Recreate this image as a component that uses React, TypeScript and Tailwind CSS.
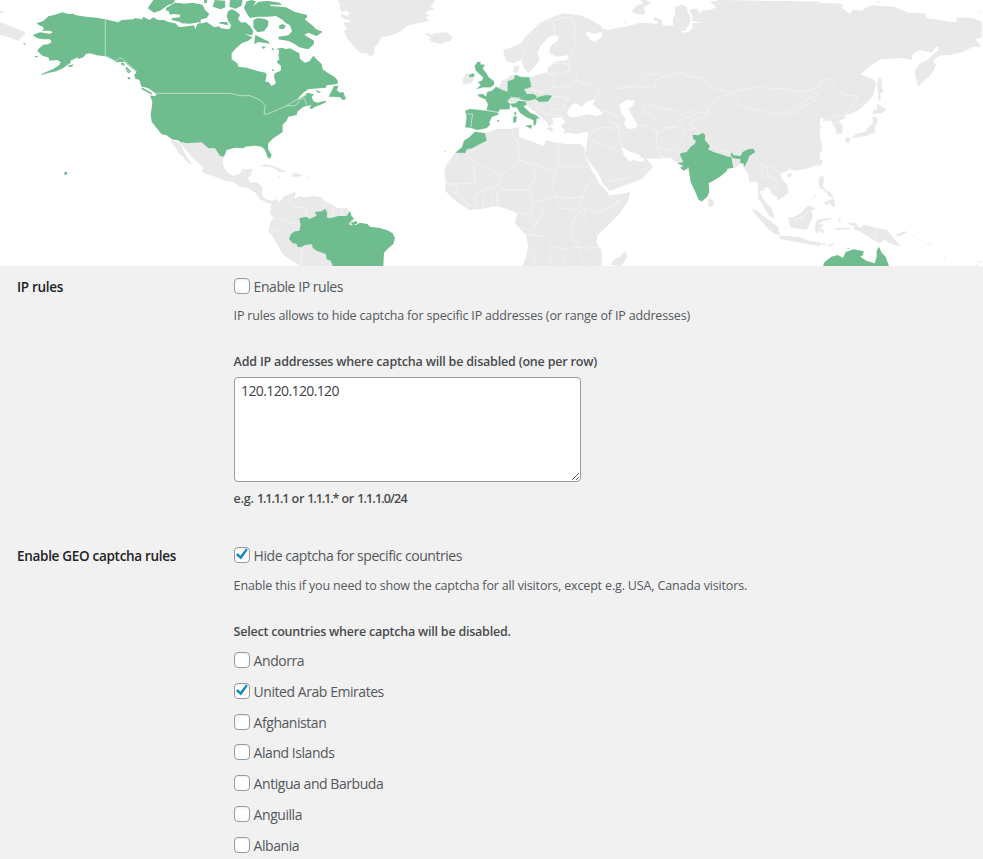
import { useState } from "react";

const GREEN = "#6fbd8f";
const LAND = "#e9e9e9";

function WorldMap() {
  return (
    <svg className="block h-[266px] w-full shrink-0 bg-white" viewBox="0 0 2949 798" preserveAspectRatio="none" strokeLinejoin="round">
      {/* Greenland, Iceland, Mexico, Caribbean and South America */}
      <g transform="translate(540 0)" fill={LAND}>
        <path d="M474,0 480,12 478,20 485,35 500,32 510,40 500,48 484,42 482,50 495,58 510,60 512,66 490,68 496,78 503,88 492,92 497,108 510,125 525,145 545,160 560,160 575,171 582,160 584,140 596,128 604,112 640,104 665,92 680,78 720,68 748,64 738,52 750,48 735,38 750,30 765,28 752,22 760,8 765,0Z" />
        <path d="M0,427 65,427 85,445 105,445 120,468 132,470 128,490 135,508 145,520 160,528 178,522 188,508 218,507 212,525 204,533 210,548 230,546 248,562 245,580 250,592 262,600 278,602 290,597 300,608 298,640 295,650 280,655 270,640 274,612 262,608 240,598 228,580 205,565 178,560 160,546 135,542 100,528 80,522 66,515 70,502 50,485 35,470 20,452 5,435Z" />
        <path d="M-25,420 0,428 8,448 22,472 34,490 32,495 16,480 8,468 -5,460 -8,450 -28,425Z" />
        <path d="M240,498 258,492 285,500 305,508 320,516 300,516 278,503 262,500ZM334,524 345,518 372,526 352,530 334,530ZM292,530 303,530 302,534 293,533ZM382,530 390,530 390,533 382,533Z" />
        <path d="M298,608 310,590 330,582 345,575 348,582 342,590 346,596 358,588 375,592 400,588 425,592 436,604 460,616 470,624 500,624 518,650 520,680 470,720 460,798 360,798 335,782 310,765 290,730 275,705 265,695 268,680 272,665 282,653 295,650Z" />
        <path d="M340,588 330,605 345,620 378,625 380,650M436,604 432,630M462,618 458,650M485,626 485,648M295,655 320,665 355,672M268,690 290,695 318,675M366,745 362,798" fill="none" stroke="#f3f3f3" strokeWidth="3" />
      </g>
      <g transform="translate(540 0)" fill={GREEN}>
        <path d="M358,655 380,650 388,657 410,647 404,636 425,634 436,626 442,640 440,652 450,655 475,648 500,648 510,633 514,648 522,655 508,668 508,676 530,674 540,668 562,672 570,680 600,684 620,690 638,700 645,715 640,732 625,745 612,758 610,798 458,798 452,782 440,778 437,762 410,752 398,744 396,733 378,734 362,742 352,740 350,732 338,730 327,717 333,702 345,694 358,692 362,675Z" />
        <path d="M0,82 42,76 47,90 50,74 80,66 92,74 103,82 118,79 122,85 148,88 154,76 145,64 140,48 144,34 155,28 166,32 180,44 174,58 185,68 196,66 210,78 220,94 216,106 194,102 218,112 205,122 185,130 165,148 155,160 155,178 172,190 175,200 200,203 230,212 256,218 260,222 256,245 266,246 275,258 288,250 282,230 284,220 302,212 303,198 290,186 298,178 295,165 298,152 290,146 305,143 318,147 330,145 358,160 360,176 374,188 388,184 400,167 412,180 425,192 428,208 445,220 465,232 474,243 472,252 440,256 438,263 400,266 385,268 370,278 358,290 350,300 370,290 382,278 402,283 395,290 400,304 412,308 436,302 438,307 420,315 405,320 396,327 388,324 394,315 370,320 352,335 350,345 325,350 320,362 308,374 308,396 280,415 265,430 264,446 275,465 270,477 262,470 255,450 245,440 225,437 195,440 190,445 165,443 140,450 132,470 120,468 105,445 85,445 65,427 0,427Z" />
        <path d="M192,24 200,4 216,0 228,4 220,18 235,5 265,3 272,18 300,20 318,22 345,36 380,44 382,52 374,58 402,80 408,88 428,95 410,108 385,98 373,104 402,122 402,132 385,148 358,142 340,130 325,123 295,118 296,110 325,106 336,94 330,76 316,68 308,60 288,48 265,50 235,50 210,54 200,40Z" />
        <path d="M220,60 232,54 252,56 265,62 264,78 252,94 232,97 220,82ZM226,105 240,112 264,124 270,131 236,126 222,132ZM296,78 308,72 318,78 310,88 298,86ZM244,139 258,140 250,147ZM275,145 280,145 281,151 276,150ZM276,207 284,210 278,214ZM0,12 40,8 68,15 75,30 88,42 80,54 58,60 35,68 0,66ZM98,20 122,28 136,22 135,2 104,0 102,8ZM72,0 82,0 80,10 72,8ZM150,0 188,0 184,18 166,26 148,20ZM120,66 142,66 144,76 116,70ZM260,2 300,8 306,14 270,14ZM404,271 424,275 416,279ZM446,290 462,258 476,257 470,270 480,278 490,276 498,298 488,300 480,292 460,290Z" />
        <path d="M512,668 530,664 533,670 520,676Z" />
      </g>
      <g fill={GREEN}>
        <path d="M316,58 290,53 258,50 225,45 222,41 205,42 187,37 165,44 145,49 130,63 109,70 118,76 128,80 132,86 125,92 150,92 158,97 150,101 130,98 120,97 98,105 112,115 132,118 150,118 155,126 145,133 130,134 116,146 112,153 128,168 145,172 148,182 172,180 182,186 178,195 160,207 140,215 125,222 122,226 145,219 168,214 186,206 212,188 212,180 235,172 232,178 250,172 258,162 270,160 290,166 316,169 335,178 350,187 372,186 385,196 405,212 403,225 406,236 418,240 424,260 448,266 468,282 466,288 450,286 457,305 455,325 452,342 455,365 470,385 485,403 500,406 515,418 530,420 560,430 602,427 602,66 592,74 588,88 582,80 560,84 536,80 526,70 505,66 492,60 474,60 460,52 448,60 430,50 426,58 405,54 400,58 366,60 354,67 342,64Z" />
        <path d="M211,184 226,166 238,155 242,159 230,172ZM204,197 222,193 216,200 206,201ZM104,168 112,167 114,171 106,172ZM68,128 78,131 75,135ZM383,232 390,231 391,238 384,238ZM193,516 201,516 201,524 193,524ZM375,204 384,212 391,221 383,218ZM443,25 460,0 525,0 520,10 505,15 480,32 462,38ZM498,24 525,8 545,10 560,18 570,12 602,12 602,66 570,71 545,70 540,66 516,60 514,55 550,50 550,45 520,42 510,44 505,32 498,32Z" />
      </g>
      <g fill={LAND}>
        <path d="M0,66 40,82 58,90 74,95 76,103 64,112 55,123 35,114 20,110 0,105ZM0,32 15,36 0,40ZM58,760 60,762 57,763ZM246,791 249,793 245,793Z" />
      </g>
      {/* Borders across North America */}
      <g fill="none" stroke="#b9dfc8" strokeWidth="3">
        <path d="M316,56V167L348,184 358,173 366,176 385,192 408,213M452,280H692L720,287H750L780,300 796,318 792,342 800,342 820,335 835,328 858,318 885,302 920,285M858,318 888,316 900,298 914,295 920,315" />
      </g>
      <path d="M366,190 375,186 385,200 398,215 410,214 405,223 388,212ZM420,259 442,264 468,282 466,289 452,285 440,270Z" fill="#fff" />
      <path d="M363,192 370,191 372,197M378,202 392,216M425,265 455,281" fill="none" stroke={GREEN} strokeWidth="5" />

      {/* Eurasian mainland, eastern part */}
      <g transform="translate(2349 0)" fill={LAND}>
        <path d="M-30,3 25,2 70,12 98,9 150,10 180,12 175,22 200,42 210,30 235,32 262,16 335,20 375,38 425,40 432,55 470,60 505,66 520,66 522,52 570,55 596,66 596,112 575,118 592,135 590,142 570,140 540,155 500,166 478,165 460,172 450,185 460,192 452,210 440,228 425,240 406,260 398,235 396,210 412,190 430,182 455,160 466,150 466,141 458,140 448,158 410,150 390,162 386,180 360,174 330,176 295,178 270,192 232,222 250,230 270,238 280,250 272,282 255,305 225,332 190,345 182,358 168,362 180,380 178,400 158,402 160,388 150,374 145,362 128,362 118,366 122,352 100,364 85,370 98,380 122,380 110,386 98,396 108,408 116,430 118,450 100,475 75,490 40,500 15,508 0,505 -60,520Z" />
        <path d="M288,230 296,240 296,262 302,275 292,280 293,300 286,303 285,280 282,250ZM282,312 300,322 312,329 295,340 278,340 268,344 272,330 282,328ZM268,352 282,352 284,365 276,380 275,398 250,408 232,410 208,410 225,400 245,396 262,376 270,370ZM200,412 226,406 222,414ZM186,414 202,412 198,428 190,430ZM106,492 114,478 120,480 114,496 108,500ZM12,522 28,518 24,530 14,532ZM108,530 122,528 122,548 118,560 128,566 130,574 112,565 106,548ZM122,572 134,572 148,582 150,592 138,592 132,580ZM122,608 152,594 158,614 150,622 142,612 128,614ZM82,600 100,584 98,590ZM588,38 596,35 596,40ZM275,3 292,5 285,9ZM575,795 584,792 585,797ZM586,786 596,782 594,790Z" />
        <path d="M15,652 30,652 55,638 75,616 98,626 84,632 90,648 76,680 70,690 45,686 22,682ZM98,664 108,658 148,653 142,660 120,662 108,672 126,674 112,682 124,694 120,702 108,688 106,702 96,692ZM196,668 218,668 228,684 245,674 280,683 312,690 330,712 355,740 320,730 305,720 288,730 262,715 250,706 225,692 210,686 218,678 200,676ZM156,684 196,684 206,688 160,689ZM166,655 174,655 168,672ZM0,708 50,712 76,722 100,726 92,730 50,722 0,716ZM100,732 128,730 130,735 100,735ZM133,735 158,726 150,734 138,740ZM340,704 365,694 372,696 355,707 340,708ZM390,704 398,710 390,708ZM405,715 415,720 412,722ZM425,725 450,738 440,736ZM456,742 462,745 458,746ZM482,770 490,776 486,778Z" />
      </g>
      {/* Central and southern Asia */}
      <g transform="translate(1860 0)" fill={LAND}>
        <path d="M0,84 25,78 48,72 60,68 110,72 115,65 100,60 105,50 125,60 128,76 160,78 158,60 166,40 165,22 182,14 200,20 204,38 212,50 210,70 195,92 180,95 190,98 205,96 218,84 216,70 245,68 214,62 218,50 208,30 230,25 240,42 245,32 275,28 290,22 270,6 300,0 600,5 600,492 565,505 540,510 525,512 510,508 495,515 480,522 488,540 502,555 506,580 488,592 472,602 470,590 455,582 450,568 438,560 430,575 418,570 426,590 440,612 455,625 462,645 462,655 448,648 436,630 426,608 416,600 414,575 412,545 388,545 384,520 372,505 362,490 350,500 330,505 260,550 200,510 188,490 172,490 155,475 124,472 75,476 35,462 22,452 0,440Z" />
        <path d="M268,592 282,606 278,620 266,620 264,604ZM392,624 412,632 430,648 450,662 474,680 480,706 465,702 445,688 430,670 412,650ZM478,708 500,708 540,714 552,718 578,726 600,727 598,738 560,732 510,722 478,716ZM10,66 20,64 14,69ZM46,25 60,20 70,10 60,0 80,0 92,10 70,22 78,38 68,44 48,42 34,32Z" />
      </g>
      {/* Europe, Africa and the Middle East */}
      <g transform="translate(1260 0)" fill={LAND}>
        <path d="M14,103 25,98 34,106 48,99 80,97 98,110 90,122 60,132 38,126 26,118 34,112ZM128,238 140,220 155,222 162,236 155,248 130,254ZM636,30 652,16 665,12 668,20 655,28 662,40 640,34ZM280,200 298,196 296,210 290,220 280,215Z" />
        <path d="M250,150 275,142 305,128 315,112 340,88 358,70 395,52 430,40 480,46 520,64 546,80 545,95 520,100 500,94 515,110 520,125 545,112 545,85 565,90 580,86 600,82 625,88 655,78 680,70 725,72 725,476 700,476 680,470 655,464 640,480 670,486 675,472 700,500 665,538 570,572 552,554 535,520 510,490 492,460 480,446 497,456 502,420 505,395 470,402 440,398 428,400 425,390 405,384 400,372 390,378 400,388 395,396 380,386 365,362 355,352 345,338 318,312 310,298 250,300 230,280 235,264 245,242 262,235 270,226 295,226 328,232 355,224 382,216 384,200 395,190 410,184 440,180 448,168 415,172 390,168 385,150 395,135 415,120 400,105 382,118 380,132 360,145 352,160 362,175 345,200 325,218 312,205 304,180 280,190 258,182 252,165Z" />
        <path d="M165,400 200,398 230,386 275,386 295,382 298,390 296,410 330,422 370,438 378,420 410,428 440,432 480,432 495,445 492,460 510,500 535,545 560,575 568,586 600,582 630,576 626,600 600,640 560,680 532,705 530,730 545,750 545,798 308,798 318,770 325,740 318,705 295,680 284,670 292,640 262,628 230,618 180,628 148,630 110,605 75,572 78,545 72,510 85,485 106,460 150,440ZM572,795 580,780 600,770 615,752 622,770 605,798Z" />
      </g>
      {/* Inland seas and gulfs */}
      <g fill="#fff">
        <path transform="translate(1260 0)" d="M440,338 452,318 468,308 485,320 498,306 525,298 518,314 540,330 550,342 530,348 500,342 470,350 450,352ZM397,355 425,352 436,366 422,378 436,392 428,402 404,388ZM598,314 620,300 645,302 640,316 625,325 638,350 652,372 648,385 622,386 612,372 618,358 604,340ZM604,440 630,455 660,465 662,474 640,480 628,484 612,466ZM290,314 305,308 345,335 375,360 390,382 380,384 360,360 330,340 308,326Z" />
        <path transform="translate(1260 0)" d="M360,140 385,112 410,106 418,114 390,138 388,160 410,170 444,166 446,174 405,182 395,196 384,202 380,218 345,225 340,206 360,180 355,160ZM498,88 545,80 548,96 520,101 548,100 545,112 525,125 512,120 500,106Z" />
        <path transform="translate(1860 0)" d="M335,470 358,474 360,482 344,504 332,504Z" fill={LAND} />
      </g>
      <path transform="translate(1260 0)" d="M455,46 480,46 520,64 546,80 546,96 522,101 490,92 465,84Z" fill={LAND} />
      {/* Land borders */}
      <g fill="none" stroke="#f3f3f3" strokeWidth="2.6">
        <path transform="translate(1260 0)" d="M304,180 316,140 330,110 350,88 372,64 405,60 432,52 455,55 466,90 460,115 470,135 448,165M405,106 400,65M395,190 440,190 452,210 410,222 384,218M448,175 445,208 470,225 472,245 520,258 540,278 520,300M328,232 334,268 370,278 398,265 405,240 400,228 382,220M398,265 460,255 470,240M395,288 420,290 445,294 430,315 438,325 410,330 396,322 390,342 380,345 365,330 345,320M396,288 412,310M390,345 430,350M550,330 585,345 605,358M560,350 575,370 600,375M504,395 550,382 585,385 600,375M520,395 500,420M595,385 605,438M505,425 520,420 550,435 590,450M500,445 520,440M590,265 640,260 655,240 680,225 720,220M640,530 660,510 700,500M565,545 600,538 640,530M415,428 414,505M414,500H505M295,410 294,455 300,480 410,515M278,390 282,410 294,430M200,425 180,440 138,462 160,482 220,515 245,525 300,480M160,482 165,550 100,552 78,548M110,462 112,480 85,490M300,480 340,498 345,530 325,568 300,570 245,568 230,582 240,618M245,525 240,550 220,560 180,575 165,590M408,515 395,560 405,590 370,600 340,610 325,568M405,590 425,625 480,630 500,620M405,590 450,595 490,590 480,620M490,590 500,560 515,535 560,570M505,625 540,638 600,605 570,590 565,580M500,625 490,650 500,670 532,700M480,632 455,670 455,700 470,730 480,750M340,615 330,650 350,670 325,690 305,680M370,620 360,655 340,690 330,705M318,705 380,708 395,740 440,750 465,740 510,745 545,740M345,798 340,760 325,750M390,750 390,780 400,798M430,798 435,760M100,575 130,600 148,620M165,590 170,625M190,585 188,625M215,585 220,618M228,580 232,618M70,548 110,560 115,580M480,755 490,780 515,798M292,640 330,640" />
        <path transform="translate(1860 0)" d="M0,268 30,258 70,262 105,260 110,238 140,228 180,218 215,232 245,232 265,258 300,268 330,280 360,270 415,262 425,252 445,268 490,265 530,275 570,272 585,280M330,280 350,295 360,315 400,328 460,342 525,342 550,320 590,300 570,290M325,280 290,300 265,325 265,345 220,360 205,370 235,395M68,320 90,312 120,325 165,330 180,345 215,335 260,338M70,320 72,345 90,340 140,385 165,378 190,355 215,350M40,378 75,375 108,390 112,450 130,472M110,400 140,385 185,380 200,390 228,385M115,445 160,450 195,400M185,350 205,350M258,430 300,450 335,460M410,470 420,490 440,505 450,495 480,520M415,515 425,510 430,535 455,530 480,560 455,565M440,505 445,525M425,590 430,560M520,660 545,655 570,630" />
        <path transform="translate(2349 0)" d="M80,268 105,285 65,300 40,325 0,340M75,272 105,262 110,242 140,238 165,270 190,285 225,290 215,310 200,328 190,345 150,350 122,365M150,372 170,366M277,683V725M30,660 68,648" />
      </g>
      {/* Highlighted European countries and Morocco */}
      <g transform="translate(1260 0)" fill={GREEN} stroke="#93cda9" strokeWidth="1">
        <path d="M164,198 172,186 182,186 180,193 194,195 188,206 198,218 206,232 222,244 222,254 212,262 190,262 170,267 182,255 174,246 186,242 190,232 178,222 168,212ZM147,226 158,220 165,226 160,231 147,230Z" />
        <path d="M172,284 188,282 198,290 202,276 216,272 228,260 246,270 275,279 272,292 262,304 270,312 268,328 240,328 235,336 200,330 204,312 196,298 178,290Z" />
        <path d="M136,332 150,327 198,332 235,338 234,344 216,350 208,366 210,374 200,384 172,390 154,384 136,382 140,350ZM165,395 195,400 200,422 175,434 158,444 140,448 136,459 106,458 126,442 132,422 148,412Z" />
        <path d="M263,244 283,237 285,224 304,232 328,232 334,261 312,268 322,284 306,294 270,290 263,272Z" />
        <path d="M298,298 320,282 340,282 350,288 348,296 325,302ZM346,296 358,290 380,285 396,287 385,304 358,306Z" />
        <path d="M270,311 286,310 296,302 315,304 320,314 310,319 330,338 348,346 360,356 350,354 348,372 342,378 340,360 320,352 300,338 290,322 278,322ZM316,377 336,375 333,386ZM280,350 290,348 288,366 280,368ZM283,337 288,336 288,345 283,344ZM231,361 237,361 237,364 232,365Z" />
        <path d="M142,342 158,342 155,360 153,382" fill="none" stroke="#b9dfc8" strokeWidth="3" />
        <path d="M265,299 280,292 296,297 285,306 265,304Z" fill={LAND} />
        <path d="M73,454 76,454 75,456Z" />
      </g>
      <g transform="translate(1860 0)" fill={GREEN}>
        <path d="M218,404 235,406 248,398 256,406 254,420 270,438 264,448 280,456 300,462 325,470 334,472 340,503 322,506 320,514 300,530 280,542 266,550 268,576 262,590 246,604 236,600 226,576 212,546 208,520 206,502 192,512 180,503 190,498 172,490 190,486 180,466 182,460 200,456 212,440 224,432 228,422 220,418Z" />
        <path d="M334,456 340,466 362,468 368,456 384,448 400,446 406,456 388,468 382,484 374,500 370,490 360,488 362,478 338,474 332,466Z" />
      </g>
      <path transform="translate(2349 0)" d="M120,798 125,786 145,770 165,765 180,774 188,756 212,748 242,754 240,765 232,770 250,782 275,790 281,770 281,752 288,740 296,758 308,770 318,798ZM192,746 197,744 198,748Z" fill={GREEN} />
    </svg>
  );
}

function Checkbox({ label, initial = false }: { label: string; initial?: boolean }) {
  const [checked, setChecked] = useState(initial);
  return (
    <label className="flex h-[30.8px] cursor-pointer items-start text-[14px] leading-[18px] tracking-[-0.45px] text-[#54585c]">
      <input className="peer sr-only" type="checkbox" checked={checked} onChange={() => setChecked(!checked)} />
      <span className="mr-1 flex size-4 shrink-0 items-center justify-center rounded-[4px] border border-[#969ca3] bg-white shadow-[inset_0_1px_2px_rgba(0,0,0,0.08)]">
        {checked && (
          <svg className="size-[15px] shrink-0" viewBox="0 0 15 15" fill="#1688be">
            <path d="M12.1 1.5 13.8 2.7 7 12.5 2 8 3.8 6.1 6.3 8.7Z" />
          </svg>
        )}
      </span>
      <span>{label}</span>
    </label>
  );
}

const countries = [
  { name: "Andorra", checked: false },
  { name: "United Arab Emirates", checked: true },
  { name: "Afghanistan", checked: false },
  { name: "Aland Islands", checked: false },
  { name: "Antigua and Barbuda", checked: false },
  { name: "Anguilla", checked: false },
  { name: "Albania", checked: false },
];

export default function App() {
  return (
    <div className="flex h-[859px] w-[983px] flex-col overflow-hidden bg-[#f1f1f1] font-['Open_Sans','Noto_Sans',sans-serif] text-[#54585c]">
      <WorldMap />
      <section className="flex h-[269px] shrink-0 pt-[11.5px] pl-[17px]">
        <h2 className="w-[216.6px] text-[13.5px] leading-[18px] font-semibold tracking-[-0.3px] text-[#1d2327]">IP rules</h2>
        <div className="flex flex-col items-start whitespace-nowrap">
          <Checkbox label="Enable IP rules" />
          <p className="h-[46px] text-[12.5px] leading-[16px] tracking-[-0.17px]">IP rules allows to hide captcha for specific IP addresses (or range of IP addresses)</p>
          <p className="h-[22.5px] text-[12.5px] leading-[16px] font-semibold tracking-[-0.19px] text-[#484b4e]">Add IP addresses where captcha will be disabled (one per row)</p>
          <textarea className="block h-[105px] w-[347px] resize rounded-[4px] border border-[#969ca3] bg-white px-[6.5px] py-[2px] text-[14px] leading-[21px] tracking-[-0.62px] text-[#3c434a] outline-none" defaultValue="120.120.120.120" />
          <p className="mt-2 text-[12.5px] leading-[18px] font-semibold tracking-[-0.19px] text-[#484b4e]">
            e.g. <span className="tracking-[-1.05px]">1.1.1.1</span> or <span className="tracking-[-1.05px]">1.1.1.*</span> or <span className="tracking-[-0.85px]">1.1.1.0/24</span>
          </p>
        </div>
      </section>
      <section className="flex grow pt-[11.7px] pl-[17px]">
        <h2 className="w-[216.6px] text-[13.5px] leading-[18px] font-semibold tracking-[-0.3px] text-[#1d2327]">Enable GEO captcha rules</h2>
        <div className="flex flex-col items-start whitespace-nowrap">
          <Checkbox label="Hide captcha for specific countries" initial />
          <p className="h-[46px] text-[12.5px] leading-[17px] tracking-[-0.155px]">Enable this if you need to show the captcha for all visitors, except e.g. USA, Canada visitors.</p>
          <p className="h-[28.5px] text-[12.5px] leading-[17px] font-semibold tracking-[-0.22px] text-[#484b4e]">Select countries where captcha will be disabled.</p>
          {countries.map((country) => (
            <Checkbox key={country.name} label={country.name} initial={country.checked} />
          ))}
        </div>
      </section>
    </div>
  );
}
